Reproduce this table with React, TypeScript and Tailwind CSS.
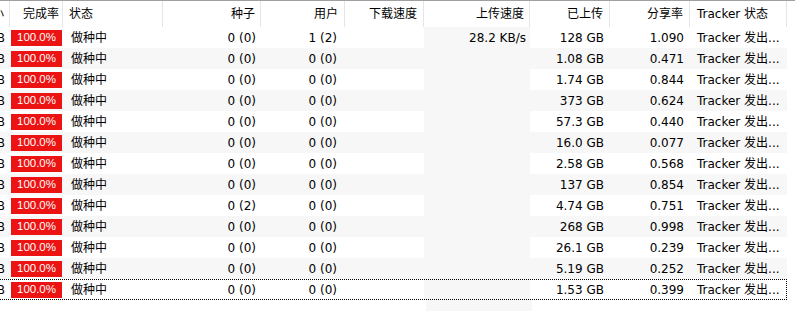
import React from "react";

type Row = { seeds: string; peers: string; up: string; uploaded: string; ratio: string };

const rows: Row[] = [
  { seeds: "0 (0)", peers: "1 (2)", up: "28.2 KB/s", uploaded: "128 GB", ratio: "1.090" },
  { seeds: "0 (0)", peers: "0 (0)", up: "", uploaded: "1.08 GB", ratio: "0.471" },
  { seeds: "0 (0)", peers: "0 (0)", up: "", uploaded: "1.74 GB", ratio: "0.844" },
  { seeds: "0 (0)", peers: "0 (0)", up: "", uploaded: "373 GB", ratio: "0.624" },
  { seeds: "0 (0)", peers: "0 (0)", up: "", uploaded: "57.3 GB", ratio: "0.440" },
  { seeds: "0 (0)", peers: "0 (0)", up: "", uploaded: "16.0 GB", ratio: "0.077" },
  { seeds: "0 (0)", peers: "0 (0)", up: "", uploaded: "2.58 GB", ratio: "0.568" },
  { seeds: "0 (0)", peers: "0 (0)", up: "", uploaded: "137 GB", ratio: "0.854" },
  { seeds: "0 (2)", peers: "0 (0)", up: "", uploaded: "4.74 GB", ratio: "0.751" },
  { seeds: "0 (0)", peers: "0 (0)", up: "", uploaded: "268 GB", ratio: "0.998" },
  { seeds: "0 (0)", peers: "0 (0)", up: "", uploaded: "26.1 GB", ratio: "0.239" },
  { seeds: "0 (0)", peers: "0 (0)", up: "", uploaded: "5.19 GB", ratio: "0.252" },
  { seeds: "0 (0)", peers: "0 (0)", up: "", uploaded: "1.53 GB", ratio: "0.399" },
];

const cell = "shrink-0 overflow-hidden whitespace-nowrap";

export default function App() {
  return (
    <div className="h-[311px] w-[795px] overflow-hidden bg-white text-[12px] text-black font-['DejaVu_Sans','Noto_Sans_CJK_SC',sans-serif]">
      <div className="-ml-[20px] flex h-full flex-col">
        {/* header */}
        <div className="flex h-[27px] shrink-0 items-stretch border-t border-[#a0a0a0] leading-[26px]">
          <div className={cn(cell, "w-[30px] border-r border-[#e5e5e5] pr-[5px] text-right")}>大小</div>
          <div className={cn(cell, "w-[53px] border-r border-[#e5e5e5] pr-[3px] text-right")}>完成率</div>
          <div className={cn(cell, "w-[100px] border-r border-[#e5e5e5] pl-[6px]")}>状态</div>
          <div className={cn(cell, "w-[98px] border-r border-[#e5e5e5] pr-[5px] text-right")}>种子</div>
          <div className={cn(cell, "w-[84px] border-r border-[#e5e5e5] pr-[6px] text-right")}>用户</div>
          <div className={cn(cell, "w-[79px] border-r border-[#e5e5e5] pr-[6px] text-right")}>下载速度</div>
          <div className={cn(cell, "w-[106px] border-r border-[#e5e5e5] pr-[5px] text-right")}>上传速度</div>
          <div className={cn(cell, "w-[80px] border-r border-[#e5e5e5] pr-[6px] text-right")}>已上传</div>
          <div className={cn(cell, "w-[80px] border-r border-[#e5e5e5] pr-[6px] text-right")}>分享率</div>
          <div className={cn(cell, "w-[97px] border-r border-[#e5e5e5] pl-[7px]")}>Tracker 状态</div>
        </div>

        {rows.map((r, i) => {
          const last = i === rows.length - 1;
          return (
            <div
              key={i}
              className={cn(
                "flex h-[21px] w-[807px] shrink-0 items-center",
                i % 2 === 1 ? "bg-[#f7f7f7]" : "bg-white",
                last && "outline outline-1 outline-dotted outline-black -outline-offset-1"
              )}
            >
              <div className={cn(cell, "w-[30px] pr-[5px] text-right")}>GB</div>
              <div className={cn(cell, "flex w-[53px] justify-start pl-[1px]")}>
                <div className="flex h-[16px] w-[51px] items-center justify-center bg-[#ec1313] pt-[1px] font-['Liberation_Sans',sans-serif] text-[11.5px] text-white">
                  100.0%
                </div>
              </div>
              <div className={cn(cell, "w-[100px] pl-[8px]")}>做种中</div>
              <div className={cn(cell, "w-[98px] pr-[5px] text-right")}>{r.seeds}</div>
              <div className={cn(cell, "w-[84px] pr-[8px] text-right")}>{r.peers}</div>
              <div className={cn(cell, "w-[79px] pr-[6px] text-right")}></div>
              <div className={cn(cell, "flex h-full w-[106px] items-center justify-end bg-[#f7f7f7] pr-[4px]")}>{r.up}</div>
              <div className={cn(cell, "w-[80px] pr-[6px] text-right")}>{r.uploaded}</div>
              <div className={cn(cell, "w-[80px] pr-[6px] text-right")}>{r.ratio}</div>
              <div className={cn(cell, "w-[97px] pl-[7px]")}>Tracker 发出...</div>
            </div>
          );
        })}

        {/* empty area below the list */}
        <div className="flex flex-1">
          <div className="w-[446px] shrink-0" />
          <div className="w-[106px] shrink-0 bg-[#f7f7f7]" />
        </div>
      </div>
    </div>
  );
}

function cn(...parts: (string | false | undefined)[]) {
  return parts.filter(Boolean).join(" ");
}
